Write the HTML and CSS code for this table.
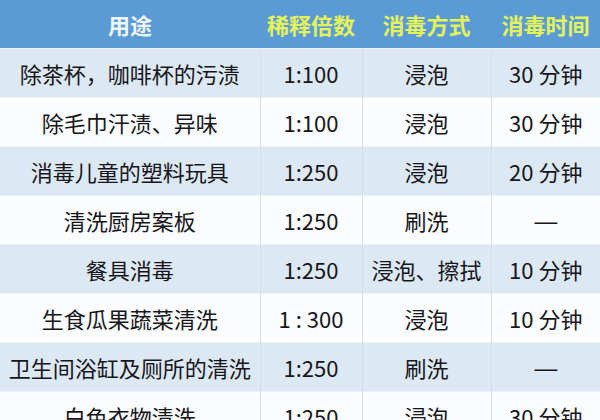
FILE: index.html
```html
<!DOCTYPE html>
<html lang="zh-CN">
<head>
<meta charset="utf-8">
<title>稀释表</title>
<link rel="stylesheet" href="styles.css">
</head>
<body>
<table class="tbl">
  <colgroup>
    <col class="c1"><col class="c2"><col class="c3"><col class="c4">
  </colgroup>
  <thead>
    <tr>
      <th class="h-white">用途</th>
      <th>稀释倍数</th>
      <th>消毒方式</th>
      <th>消毒时间</th>
    </tr>
  </thead>
  <tbody>
    <tr class="alt"><td>除茶杯，咖啡杯的污渍</td><td>1:100</td><td>浸泡</td><td>30 分钟</td></tr>
    <tr><td>除毛巾汗渍、异味</td><td>1:100</td><td>浸泡</td><td>30 分钟</td></tr>
    <tr class="alt"><td>消毒儿童的塑料玩具</td><td>1:250</td><td>浸泡</td><td>20 分钟</td></tr>
    <tr><td>清洗厨房案板</td><td>1:250</td><td>刷洗</td><td><span class="dash">—</span></td></tr>
    <tr class="alt"><td>餐具消毒</td><td>1:250</td><td>浸泡、擦拭</td><td>10 分钟</td></tr>
    <tr><td>生食瓜果蔬菜清洗</td><td>1 : 300</td><td>浸泡</td><td>10 分钟</td></tr>
    <tr class="alt"><td>卫生间浴缸及厕所的清洗</td><td>1:250</td><td>刷洗</td><td><span class="dash">—</span></td></tr>
    <tr><td>白色衣物清洗</td><td>1:250</td><td>浸泡</td><td>30 分钟</td></tr>
  </tbody>
</table>
</body>
</html>
```

FILE: styles.css
```css
html, body {
  margin: 0;
  padding: 0;
  background: #fbfcfe;
  overflow: hidden;
}
.tbl {
  width: 600px;
  table-layout: fixed;
  border-collapse: collapse;
  font-family: "Noto Sans CJK SC", "Noto Sans", sans-serif;
}
.c1 { width: 260px; }
.c2 { width: 102px; }
.c3 { width: 129px; }
.c4 { width: 109px; }
th {
  height: 48px;
  padding: 0;
  background: #5b9bd5;
  color: #e4f35a;
  font-size: 22px;
  font-weight: 700;
  text-align: center;
  vertical-align: middle;
  line-height: 1;
  white-space: nowrap;
}
th.h-white { color: #eef5fb; }
td {
  height: 48px;
  padding: 0;
  font-size: 22px;
  color: #16161a;
  text-align: center;
  vertical-align: middle;
  white-space: nowrap;
  line-height: 1;
  background: #fbfcfe;
  border-left: 1px solid #d6dde6;
  border-top: 1px solid #eef2f7;
}
td:first-child { border-left: none; }
tr.alt td { background: #dde8f5; }
.dash {
  font-family: "DejaVu Sans", sans-serif;
  display: inline-block;
  transform: scaleX(1.15);
}
```
